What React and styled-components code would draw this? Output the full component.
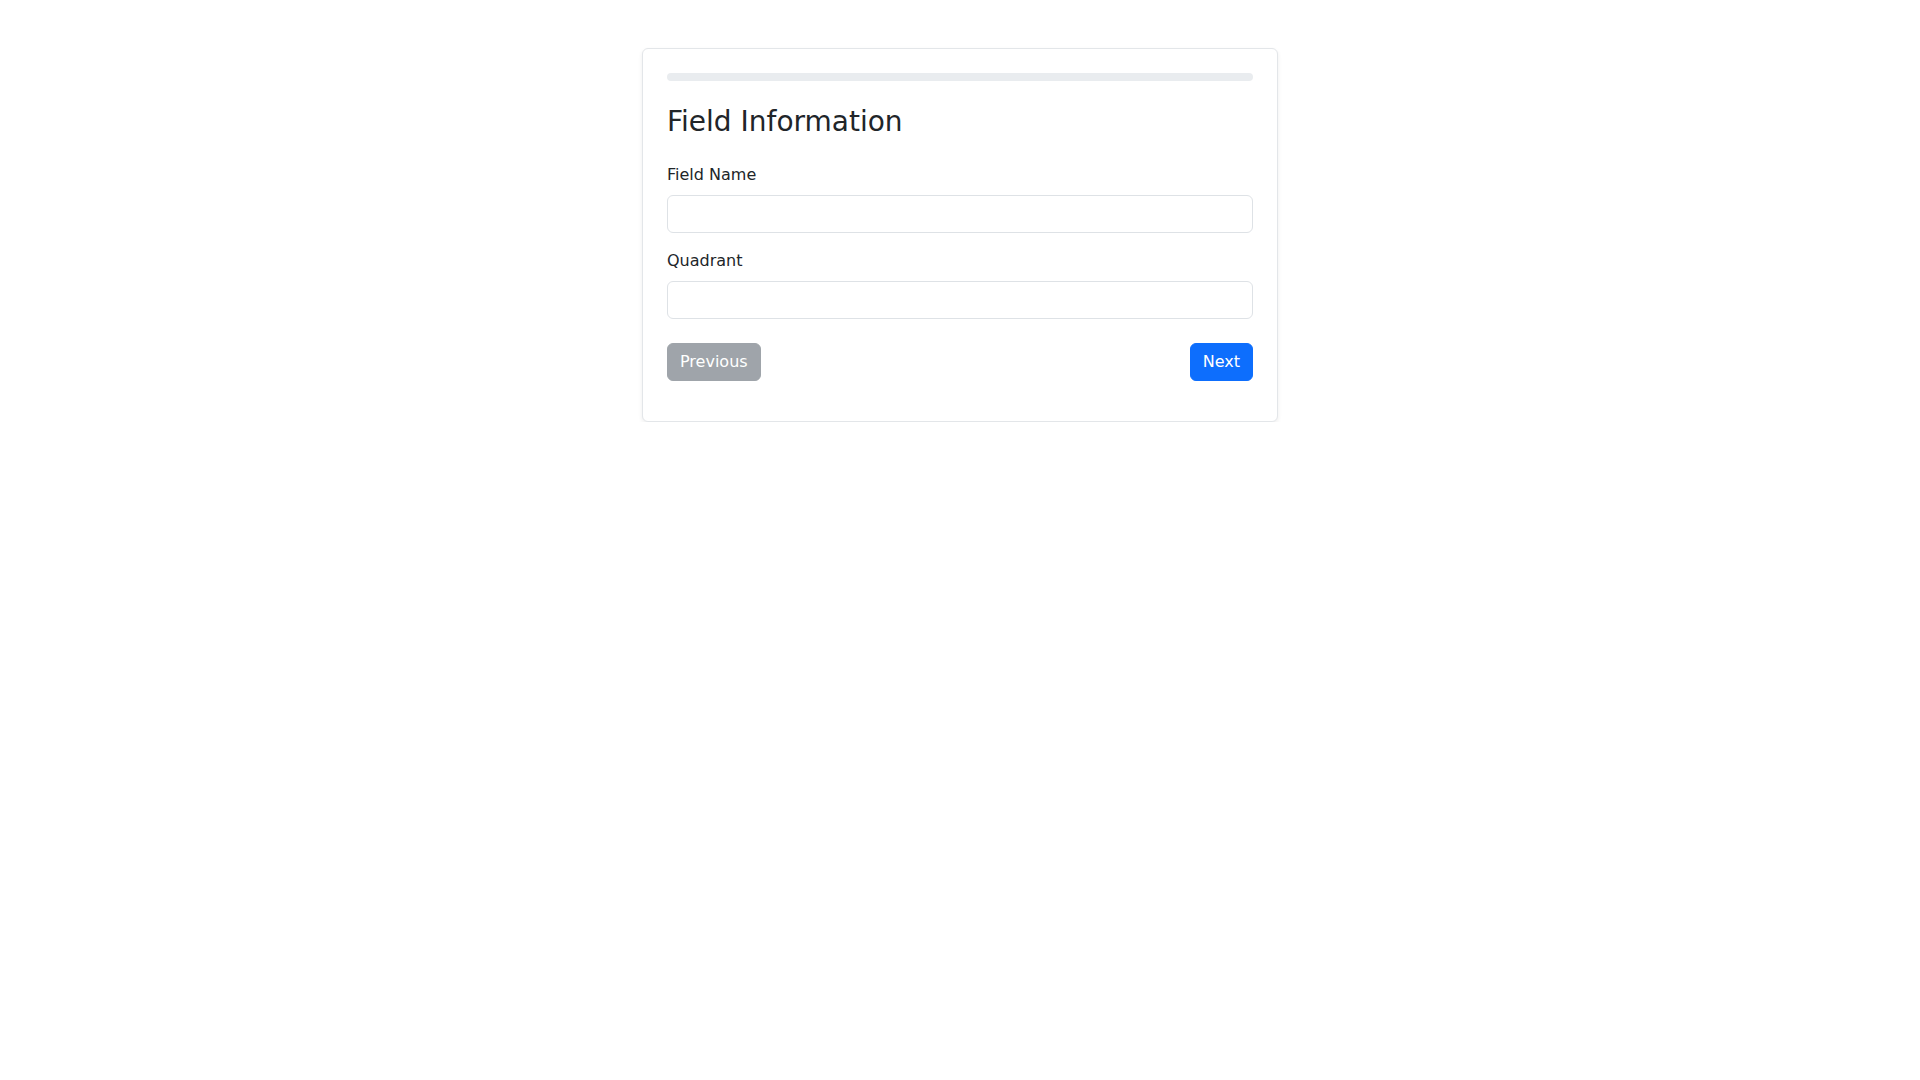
import React from "react";
import styled, { createGlobalStyle } from "styled-components";

const Global = createGlobalStyle`
  * { box-sizing: border-box; }
  body {
    margin: 0;
    background: #ffffff;
    color: #212529;
    font-family: "DejaVu Sans", sans-serif;
    font-size: 16px;
    line-height: 1.5;
  }
`;

const Page = styled.div`
  display: flex;
  justify-content: center;
  padding-top: 48px;
`;

const Card = styled.div`
  width: 636px;
  background: #fff;
  border: 1px solid #e3e6e9;
  border-radius: 6px;
  box-shadow: 0 2px 4px rgba(0, 0, 0, 0.075);
  padding: 24px;
`;

const Progress = styled.div`
  height: 8px;
  border-radius: 4px;
  background: #e9ecef;
  margin-bottom: 24px;
`;

const Title = styled.h3`
  margin: 0 0 24px;
  font-size: 28px;
  font-weight: 500;
  line-height: 1.2;
  color: #212529;
`;

const Group = styled.div`
  margin-bottom: 16px;
`;

const Label = styled.label`
  display: block;
  margin-bottom: 8px;
  font-size: 16px;
  line-height: 24px;
`;

const Input = styled.input`
  display: block;
  width: 100%;
  height: 38px;
  padding: 6px 12px;
  font-family: inherit;
  font-size: 16px;
  border: 1px solid #dee2e6;
  border-radius: 6px;
  background: #fff;
  color: #212529;
  outline: none;
`;

const Actions = styled.div`
  display: flex;
  justify-content: space-between;
  margin-top: 24px;
  margin-bottom: 16px;
`;

const Button = styled.button`
  height: 38px;
  padding: 6px 12px;
  font-family: inherit;
  font-size: 16px;
  line-height: 24px;
  color: #fff;
  border: 1px solid ${(p) => (p.$primary ? "#0d6efd" : "#6c757d")};
  background: ${(p) => (p.$primary ? "#0d6efd" : "#6c757d")};
  border-radius: 6px;
  opacity: ${(p) => (p.disabled ? 0.65 : 1)};
  cursor: ${(p) => (p.disabled ? "default" : "pointer")};
`;

export default function App() {
  return (
    <>
      <Global />
      <Page>
        <Card>
          <Progress />
          <Title>Field Information</Title>
          <Group>
            <Label htmlFor="fieldName">Field Name</Label>
            <Input id="fieldName" type="text" />
          </Group>
          <Group>
            <Label htmlFor="quadrant">Quadrant</Label>
            <Input id="quadrant" type="text" />
          </Group>
          <Actions>
            <Button disabled>Previous</Button>
            <Button $primary>Next</Button>
          </Actions>
        </Card>
      </Page>
    </>
  );
}
